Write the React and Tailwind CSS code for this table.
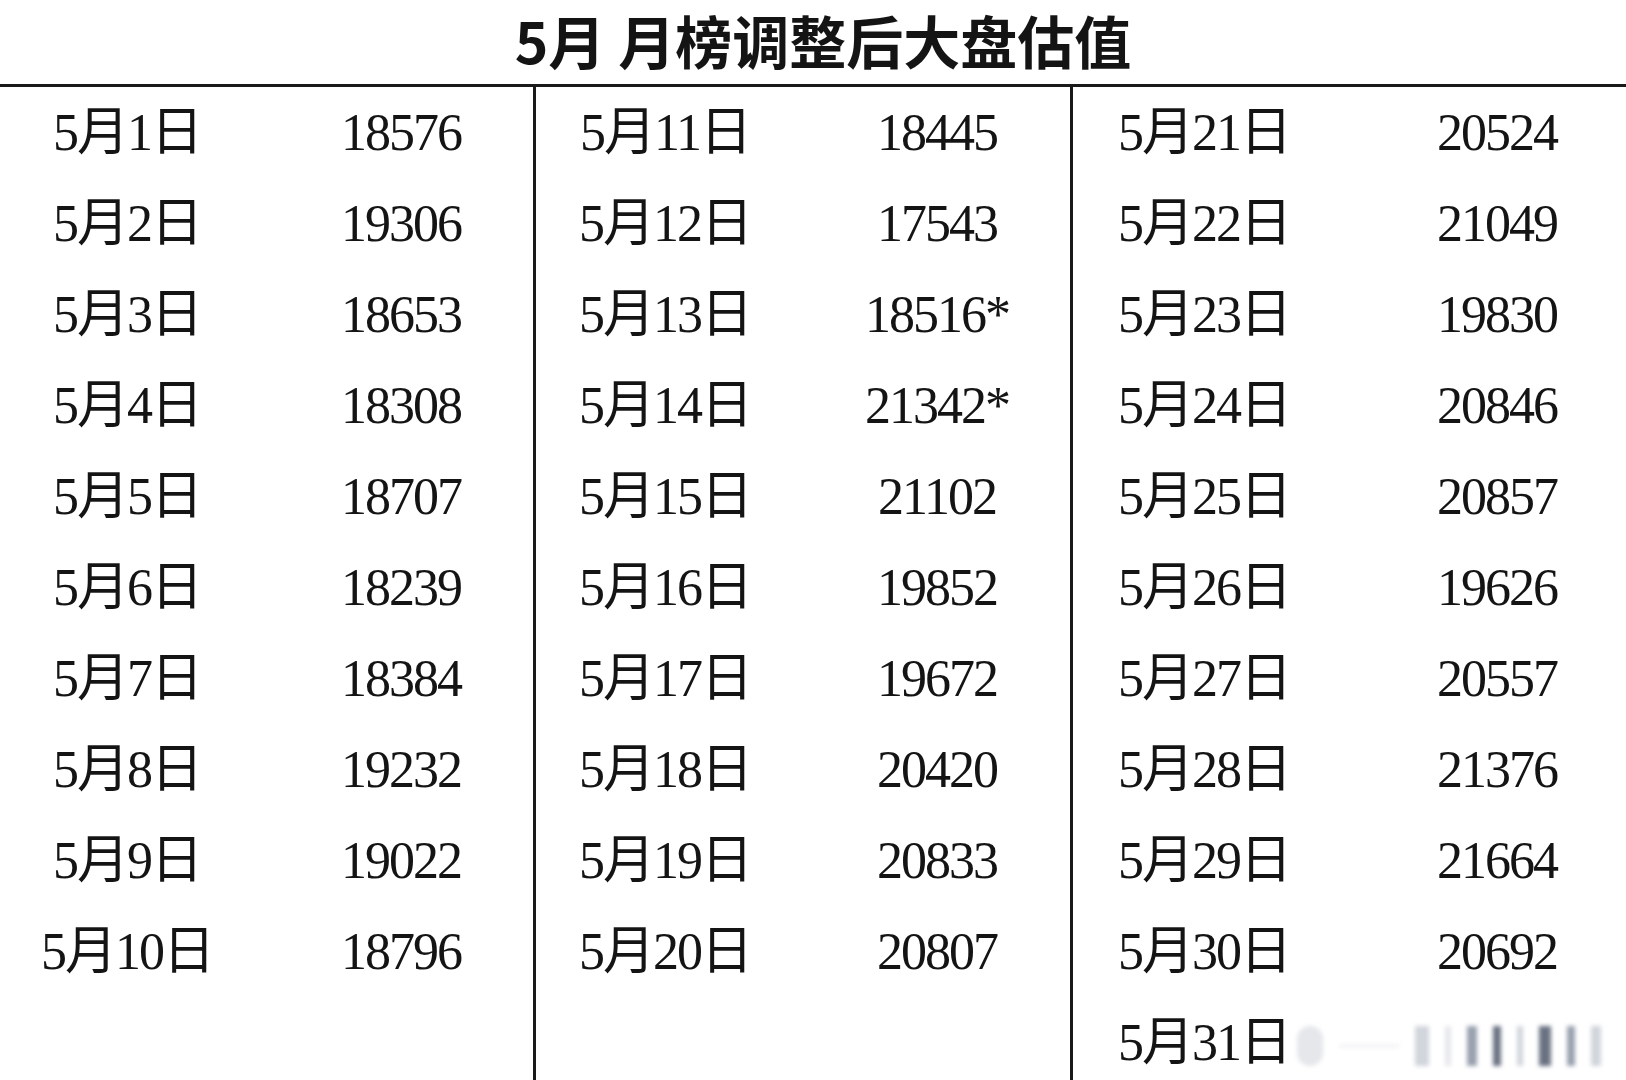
import React from "react";

const cols = [
  {
    wrap: "w-[533px]",
    date: "w-[254px]",
    num: "ml-[27px]",
    rows: [
      ["5月1日", "18576"],
      ["5月2日", "19306"],
      ["5月3日", "18653"],
      ["5月4日", "18308"],
      ["5月5日", "18707"],
      ["5月6日", "18239"],
      ["5月7日", "18384"],
      ["5月8日", "19232"],
      ["5月9日", "19022"],
      ["5月10日", "18796"],
    ],
  },
  {
    wrap: "w-[537px] border-l-[3px]",
    date: "w-[258px]",
    num: "ml-[23px]",
    rows: [
      ["5月11日", "18445"],
      ["5月12日", "17543"],
      ["5月13日", "18516*"],
      ["5月14日", "21342*"],
      ["5月15日", "21102"],
      ["5月16日", "19852"],
      ["5月17日", "19672"],
      ["5月18日", "20420"],
      ["5月19日", "20833"],
      ["5月20日", "20807"],
    ],
  },
  {
    wrap: "flex-1 border-l-[3px]",
    date: "w-[262px]",
    num: "ml-[42px]",
    rows: [
      ["5月21日", "20524"],
      ["5月22日", "21049"],
      ["5月23日", "19830"],
      ["5月24日", "20846"],
      ["5月25日", "20857"],
      ["5月26日", "19626"],
      ["5月27日", "20557"],
      ["5月28日", "21376"],
      ["5月29日", "21664"],
      ["5月30日", "20692"],
      ["5月31日", ""],
    ],
  },
];

function Watermark() {
  // blurred weibo-style watermark in the corner
  const bars = [
    "w-[14px] bg-gray-300",
    "w-[6px] bg-gray-200",
    "w-[10px] bg-gray-400",
    "w-[8px] bg-gray-500",
    "w-[6px] bg-gray-300",
    "w-[12px] bg-gray-500",
    "w-[8px] bg-gray-400",
    "w-[10px] bg-gray-300",
  ];
  return (
    <div className="absolute right-0 bottom-[10px] flex h-[48px] w-[335px] items-center gap-[16px] pl-[6px] blur-[2px]">
      <div className="h-[40px] w-[26px] rounded-full bg-gray-200" />
      <div className="h-[4px] w-[60px] bg-gray-100" />
      {bars.map((b, i) => (
        <div key={i} className={"h-[40px] " + b} />
      ))}
    </div>
  );
}

export default function App() {
  return (
    <div
      className="relative flex h-[1080px] w-[1626px] flex-col overflow-hidden bg-white text-[#141414]"
      style={{ fontFamily: '"Liberation Serif", "Noto Sans CJK SC", serif' }}
    >
      <div
        className="flex h-[87px] shrink-0 items-center justify-center border-b-[3px] border-[#1a1a1a] pb-[6px] pl-[20px] text-[57px] font-bold leading-[1.2]"
        style={{ fontFamily: '"Noto Sans CJK SC", "Noto Sans", sans-serif' }}
      >
        5月 月榜调整后大盘估值
      </div>
      <div className="flex flex-1">
        {cols.map((c, ci) => (
          <div key={ci} className={"flex flex-col border-[#1a1a1a] " + c.wrap}>
            {c.rows.map(([d, n]) => (
              <div key={d} className="flex h-[91px] shrink-0 items-center text-[52px] leading-[91px] tracking-[-2px]">
                <div className={"text-center " + c.date}>{d}</div>
                <div className={"w-[240px] text-center " + c.num}>{n}</div>
              </div>
            ))}
          </div>
        ))}
      </div>
      <Watermark />
    </div>
  );
}
